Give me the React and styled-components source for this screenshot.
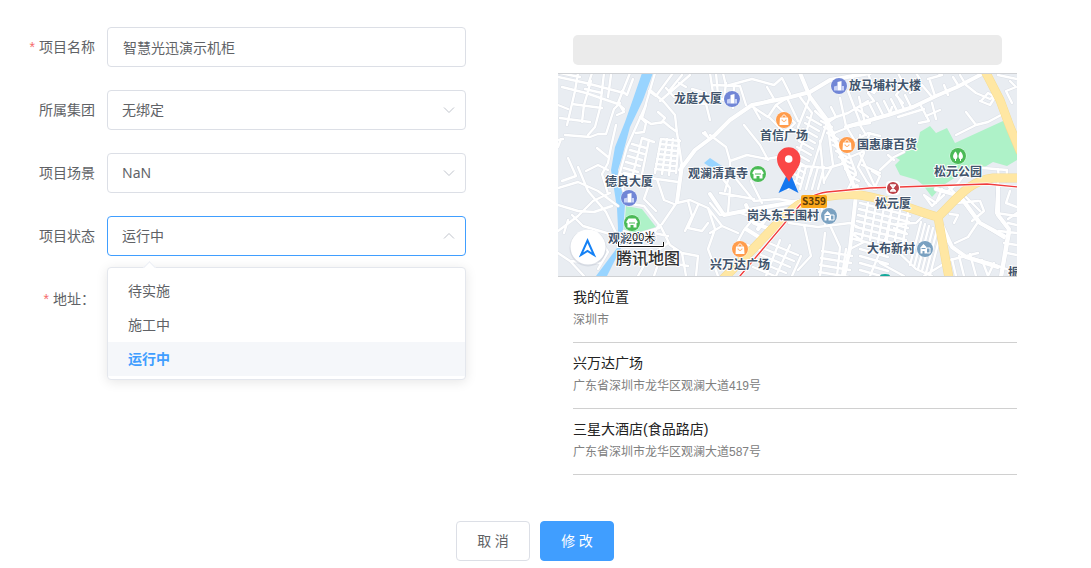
import React, { useState } from "react";
import styled, { createGlobalStyle } from "styled-components";

const GlobalStyle = createGlobalStyle`
  * {
    box-sizing: border-box;
  }
  body {
    margin: 0;
    background: #fff;
    color: #606266;
    font-family: "Noto Sans", "Noto Sans CJK SC", sans-serif;
    font-size: 14px;
  }
`;

const Page = styled.div`
  padding: 27px 21px 0 0;
`;

const Columns = styled.div`
  display: grid;
  grid-template-columns: 1fr 1fr;
  align-items: start;
`;

const Form = styled.form`
  display: flex;
  flex-direction: column;
  gap: 23px;
  padding-right: 69px;
`;

const Field = styled.div`
  display: flex;
`;

const Label = styled.label`
  flex: none;
  width: 107px;
  padding-right: 12px;
  line-height: 40px;
  text-align: right;

  &::before {
    content: "${(props) => (props.$required ? "*" : "")}";
    margin-right: 4px;
    color: #f56c6c;
    font-family: "Liberation Sans", sans-serif;
  }
`;

const Control = styled.div`
  position: relative;
  flex: 1;
`;

const TextInput = styled.input`
  display: block;
  width: 100%;
  height: 40px;
  padding: 0 15px;
  border: 1px solid #dcdfe6;
  border-radius: 4px;
  outline: none;
  background: #fff;
  color: #606266;
  font: inherit;
`;

const SelectInput = styled.select`
  display: block;
  width: 100%;
  height: 40px;
  padding: 0 30px 2px 14px;
  border: 1px solid ${(props) => (props.$open ? "#409eff" : "#dcdfe6")};
  border-radius: 4px;
  outline: none;
  appearance: none;
  background: #fff;
  color: #606266;
  font: inherit;
  cursor: pointer;
`;

const Chevron = styled.svg`
  position: absolute;
  top: 13px;
  right: 10px;
  pointer-events: none;
  transform: ${(props) => (props.$open ? "rotate(180deg)" : "none")};
`;

const Menu = styled.ul`
  position: absolute;
  z-index: 2;
  top: 51px;
  left: 0;
  right: 0;
  margin: 0;
  padding: 6px 0 3px;
  border: 1px solid #e4e7ed;
  border-radius: 4px;
  background: #fff;
  box-shadow: 0 2px 12px rgba(0, 0, 0, 0.1);
  list-style: none;

  &::before {
    content: "";
    position: absolute;
    top: -5px;
    left: 37px;
    width: 8px;
    height: 8px;
    border: solid #ebeef5;
    border-width: 1px 0 0 1px;
    background: #fff;
    transform: rotate(45deg);
  }
`;

const MenuItem = styled.button`
  display: block;
  width: 100%;
  height: 34px;
  padding: 0 20px;
  border: 0;
  background: ${(props) => (props.$active ? "#f5f7fa" : "#fff")};
  color: ${(props) => (props.$active ? "#409eff" : "#606266")};
  font: inherit;
  font-weight: ${(props) => (props.$active ? 700 : 400)};
  line-height: 34px;
  text-align: left;
  cursor: pointer;
`;

const Location = styled.section`
  padding: 8px 53px 0 23px;
`;

const SearchInput = styled.input`
  display: block;
  width: calc(100% - 30px);
  height: 30px;
  margin: 0 15px 8px;
  padding: 0 10px;
  border: 0;
  border-radius: 5px;
  outline: none;
  background: #ebebeb;
  font: inherit;
`;

const MapFrame = styled.div`
  border: solid #cfd1d4;
  border-width: 1px 0;
`;

const MapSvg = styled.svg`
  display: block;
  width: 100%;
  height: auto;
  background: #e9edf2;

  text {
    font-family: "Noto Sans CJK SC", sans-serif;
    paint-order: stroke;
    stroke: #fff;
    stroke-width: 2px;
    stroke-linejoin: round;
  }
`;

const RoadNumber = styled.text`
  && {
    stroke: none;
  }
`;

const PlaceList = styled.ul`
  margin: 0 0 0 15px;
  padding: 0;
  font-family: "Liberation Sans", "Noto Sans CJK SC", sans-serif;
  list-style: none;
`;

const Place = styled.li`
  padding: 10px 0;
  border-bottom: 1px solid #d0d0d0;
`;

const PlaceName = styled.div`
  color: #222;
  font-size: 14px;
  line-height: 21px;
`;

const PlaceAddress = styled.div`
  color: #808080;
  font-size: 12px;
  line-height: 24px;
`;

const Footer = styled.footer`
  display: flex;
  justify-content: center;
  gap: 10px;
  margin-top: 46px;
`;

const Button = styled.button`
  width: 74px;
  height: 40px;
  padding: 0 0 2px;
  border: 1px solid ${(props) => (props.$primary ? "#409eff" : "#dcdfe6")};
  border-radius: 4px;
  background: ${(props) => (props.$primary ? "#409eff" : "#fff")};
  color: ${(props) => (props.$primary ? "#fff" : "#606266")};
  font: inherit;
  cursor: pointer;
`;

// n parallel segments, each shifted by (dx, dy) from the one before
const hatch = (x1, y1, x2, y2, dx, dy, n) =>
  Array.from(
    { length: n },
    (_, i) =>
      `M${x1 + dx * i} ${y1 + dy * i}L${x2 + dx * i} ${y2 + dy * i}`
  ).join("");

const lanes = [
  // north-west blocks
  "M0 4L28 10L66 20",
  "M4 14L28 20L60 31L66 36",
  "M14 31L44 35",
  "M2 45L32 49M0 32L10 36",
  "M7 62L32 64L40 61L48 61L56 36L62 30",
  "M20 0L17 18L9 52M33 8L26 32L24 49",
  "M46 0L42 35L37 54L30 62M53 2L50 24",
  "M72 0L60 30M61 31L66 39L59 42M64 18L69 22L75 6",
  "M27 16L44 20M34 0L30 12M2 0L22 4",
  "M58 52L53 74L50 90L44 101L50 121",
  "M39 75L50 84M10 85L18 103L4 108",
  "M0 67L5 66M0 74L3 66",
  // west side
  "M0 115L20 109L40 118L60 133",
  "M0 132L20 138L36 139L54 133",
  "M20 94L30 118L48 139L58 160",
  "M0 158L20 143L35 128L52 120",
  "M14 142L25 153L52 161",
  "M28 98L40 92L50 97M38 159L50 179L40 196",
  "M10 147L6 160M0 180L12 188L26 203M12 188L42 190",
  // between river and the ring road
  "M97 0L87 34L69 74L61 103L70 132",
  "M92 17L106 29L117 42L119 60L124 92",
  "M115 0L98 23L91 18M132 2L102 28M124 2L111 18M108 15L116 24M121 10L128 14",
  "M88 32L84 45L93 51L106 49L112 54L119 59M100 39L107 45L103 50",
  "M78 60L86 59L88 50L82 44",
  hatch(74, 71, 88, 75, -2, 6, 7),
  "M84 65L74 105M91 67L83 106M84 65L96 69",
  hatch(103, 66, 122, 68, -1, 5, 7),
  "M103 66L97 100M109 66L104 101M115 66L111 102M121 67L118 100",
  "M140 30L148 31L152 47M144 31L148 20L134 16M152 0L155 20M145 60L150 64L147 59",
  "M66 100L82 103L99 106L120 109",
  "M92 109L86 126L98 138M99 106L106 127L116 131",
  // south of the mosque
  "M68 130L86 133L101 152M101 152L96 160L110 163",
  "M123 96L119 129L104 151",
  "M102 152L112 172L124 180L140 183M104 180L96 203",
  "M66 158L77 162L101 155M110 170L90 185L80 203",
  "M119 130L132 127L150 135L164 153",
  "M150 135L157 156L150 176L160 203",
  "M130 128L134 143L127 158M140 132L130 155L144 158L150 150",
  "M124 180L128 203M140 183L138 203M116 176L112 190L130 193",
  // city centre
  "M152 22L166 27L168 10M158 0L160 22M154 12L182 13L188 32M165 0L168 13L194 6L216 12",
  "M176 13L175 35M194 32L202 46M209 14L216 26L206 29M216 12L224 5L232 21",
  "M195 34L210 44L218 32L237 50L227 60L212 45M218 32L229 25L240 48",
  "M152 62L168 74L172 88L189 82L209 86L220 84M186 52L202 72L210 87",
  "M152 99L166 101L181 96M172 88L172 100L167 118",
  "M242 24L254 40L247 63L228 112M252 24L240 54M222 60L232 55L245 60",
  hatch(249, 44, 263, 52, -2, 6, 11),
  hatch(263, 48, 274, 54, 3, 6, 10),
  "M257 38L269 49L252 103M262 68L266 110M270 54L275 92L266 108",
  "M232 92L270 95L287 90",
  hatch(236, 94, 230, 116, 6, 0, 6),
  "M269 47L290 40L310 28M276 60L294 53L312 50M282 25L288 53L297 68M290 18L302 49",
  "M272 48L278 44L273 34M297 68L310 60L322 63M296 34L310 44M301 24L306 46",
  "M285 87L304 79L312 60M290 79L298 100L289 118M302 81L318 116",
  // station district
  "M152 130L162 142L180 139L196 145L186 157",
  "M160 100L172 115L170 140M174 101L196 128L220 126L244 130",
  "M162 120L196 126M193 108L204 130M196 140L232 135",
  "M152 160L164 153L180 160M186 157L180 168L204 178",
  "M231 150L260 154L292 150L300 154",
  "M246 152L253 183L240 197M271 150L282 174L279 203M262 128L267 151",
  hatch(211, 170, 240, 182, -4, 6, 5),
  "M222 167L208 203M232 172L218 203M243 183L234 203",
  hatch(264, 178, 294, 183, -1, 7, 4),
  "M267 160L262 203M288 176L284 203M293 160L306 169L292 176",
  // south-east comb of streets
  hatch(302, 130, 352, 143, -1, 6, 7),
  hatch(310, 130, 304, 165, 8, 2, 6),
  "M335 130L328 164L312 203M338 151L358 150L366 142M336 155L348 160",
  hatch(363, 149, 352, 192, 4, 2, 6),
  "M336 175L358 196L374 203M322 190L346 203M384 192L366 203",
  hatch(302, 176, 330, 184, 0, 7, 4),
  // north-east
  "M302 12L316 20L325 8L336 14M310 0L316 18M302 34L316 28L310 20",
  hatch(312, 32, 318, 44, 7, -2, 6),
  "M340 0L346 12L338 22L345 30M346 12L362 6L358 0M352 20L364 12L374 24",
  "M326 12L336 8L348 18M370 6L384 2L380 0M372 8L377 23M386 12L390 22M395 4L400 12",
  "M363 33L371 48L361 50M368 43L382 37M374 30L378 46M340 44L366 36M332 40L334 34",
  "M408 39L418 52L398 62M418 52L430 49L445 41",
  "M402 2L408 12L418 20L432 26L438 22M423 28L430 20L437 24L432 32L422 28",
  "M452 8L458 14L448 18L454 30M440 2L459 6",
  "M302 62L306 80L300 94L312 114M304 92L322 100M322 97L336 84L346 79",
  "M314 98L322 103L316 116L308 108M330 82L336 87M302 52L308 62",
  "M425 95L449 97L448 108M440 96L441 106",
  // south-east
  "M391 114L406 130L420 149L446 165",
  "M366 122L374 133L386 122M366 122L378 130L384 116M398 130L420 128M408 124L422 138",
  "M414 148L426 138L422 128M420 149L410 164L397 170M396 150L400 142L392 141",
  "M383 156L392 172L406 183L435 191L459 200",
  "M440 108L438 140L452 159L444 203M438 140L459 143M441 158L459 160",
  "M459 140L450 146M450 150L459 152M446 170L459 172M449 180L459 182",
  "M388 188L420 180M401 183L406 203M394 186L398 203M412 181L418 203M424 187L430 203L436 190",
  "M390 118L400 110L406 102M452 118L448 130L459 134",
];

const avenues = [
  "M122 97L137 77L157 62L172 47L194 32L229 25L252 19L272 7L312 0",
  "M242 0L252 24L269 47L285 87L297 116",
  "M302 50L330 42L355 34L378 23L399 14L424 1",
  "M288 54L302 50M124 92L119 129",
  "M152 121L166 142L196 136L242 128",
  "M188 156L204 166M188 132L196 150L212 156M212 140L200 156",
  "M299 113L296 140L292 175L286 203",
  "M378 116L402 123L422 150L446 163",
  "M384 152L394 174L408 184L440 194",
  "M440 112L440 142L451 156L443 203",
];

const highways = [
  "M427 -2L442 27L452 54L462 78",
  "M464 105L435 105C412 108 402 122 380 144C360 139 335 127 302 122C280 120 255 125 242 131C228 139 208 163 192 179L166 205",
  "M380 144L385 172L391 205",
];

const metro = "M182 203L242 132C250 125 256 121 269 119L312 115L429 111L460 114";

const pois = [
  { kind: "office", x: 174, y: 26 },
  { kind: "office", x: 281, y: 13 },
  { kind: "office", x: 71, y: 125 },
  { kind: "shop", x: 226, y: 47 },
  { kind: "shop", x: 289, y: 72 },
  { kind: "shop", x: 182, y: 176 },
  { kind: "temple", x: 200, y: 101 },
  { kind: "temple", x: 74, y: 150 },
  { kind: "park", x: 400, y: 83 },
  { kind: "village", x: 271, y: 143 },
  { kind: "village", x: 367, y: 176 },
];

const labels = [
  { text: "龙庭大厦", x: 116, y: 30 },
  { text: "放马埔村大楼", x: 291, y: 17 },
  { text: "首信广场", x: 202, y: 67 },
  { text: "国惠康百货", x: 299, y: 76 },
  { text: "观澜清真寺", x: 130, y: 105 },
  { text: "德良大厦", x: 47, y: 113 },
  { text: "松元公园", x: 376, y: 103 },
  { text: "松元厦", x: 317, y: 135 },
  { text: "岗头东王围村", x: 189, y: 147 },
  { text: "大布新村", x: 309, y: 180 },
  { text: "兴万达广场", x: 152, y: 196 },
  { text: "观澜古寺", x: 50, y: 170 },
  { text: "振", x: 450, y: 204 },
];

const poiColors = {
  office: "#7186d6",
  shop: "#ff9c4c",
  temple: "#4aba56",
  park: "#4aba56",
  village: "#7aa1c1",
};

const glyphs = {
  office: (
    <>
      <path d="M-5 4.5V0.5L-1.5 -0.5V4.5Z" fill="#c9d2f6" />
      <path d="M-1.500 4.500V-4L2.500 -5V4.500Z" fill="#fff" />
      <path d="M2.500 0H5V4.500H2.500Z" fill="#c9d2f6" />
    </>
  ),
  shop: (
    <>
      <path d="M-4 -2.5H4L4.500 5H-4.500Z" fill="#fff" />
      <path d="M-2 -2.5C-2 -5.8 2 -5.8 2 -2.5" fill="none" stroke="#fff" />
      <path d="M-2 -0.5C-2 2 2 2 2 -0.5" fill="none" stroke="#ff9c4c" />
    </>
  ),
  temple: (
    <>
      <path
        d="M-3.5 -4.5H3.5L5.5 -1.5V0H4.5V4.5H1.5V2H-1.5V4.5H-4.5V0H-5.5V-1.5Z"
        fill="#fff"
      />
      <path d="M-3 0H3" stroke="#4aba56" />
    </>
  ),
  park: (
    <>
      <path d="M-2.5 -4.5C-6 -1 -5.5 3 -2.5 3.2C0.2 3 0 -2 -2.5 -4.5Z" fill="#fff" />
      <path d="M2.5 -4.5C6 -1 5.5 3 2.5 3.2C-0.2 3 0 -2 2.5 -4.5Z" fill="#fff" />
      <path d="M-2.5 2V5M2.5 2V5" stroke="#fff" />
    </>
  ),
  village: (
    <>
      <path d="M-5 -1L-1.500 -5L1.500 -2V4.500H-0.500V2H-2.500V4.500H-4.500V-1Z" fill="#fff" />
      <path d="M1.500 -1H5V4H1.500Z" fill="none" stroke="#fff" />
      <path d="M-3.500 -0.500H0.500M3 1V2" stroke="#7aa1c1" />
    </>
  ),
};

const Poi = ({ kind, x, y }) => (
  <g transform={`translate(${x} ${y})`}>
    <circle r="8.5" fill="#fff" opacity="0.7" />
    <circle r="8" fill={poiColors[kind]} />
    {glyphs[kind]}
  </g>
);

const CityMap = () => (
  <MapFrame>
    <MapSvg viewBox="0 1 459 202" role="img" aria-label="地图">
      <path
        d="M342 87L337 84L350 77L360 69L362 59L372 53L378 60L389 55L397 70L445 48L459 70V87L449 93L435 89L425 95L398 104L384 113L374 124L365 112L359 107L342 102L337 92Z"
        fill="#aef2c8"
      />
      <path d="M68 133L84 136L98 154L76 163L66 158Z" fill="#aef2c8" />
      <path
        d="M84 0L74 29L67 49L57 74L53 97L59 135L60 155L59 175L38 203H49L63 175L65 159L67 132L60 97L64 84L72 54L85 27L95 0Z"
        fill="#98d4ff"
      />
      <path d="M146 90L152 85L164 93L158 98Z" fill="#98d4ff" />

      <g fill="none" strokeLinecap="round" strokeLinejoin="round">
        <path d={lanes.join("")} stroke="#dce0e7" strokeWidth="3.4" />
        <path d={avenues.join("")} stroke="#dce0e7" strokeWidth="5" />
        <path d={lanes.join("")} stroke="#fff" strokeWidth="2.4" />
        <path d={avenues.join("")} stroke="#fff" strokeWidth="4" />
        <path d={highways.join("")} stroke="#f6dc92" strokeWidth="9" />
        <path d={highways.join("")} stroke="#ffe7a3" strokeWidth="8" />
        <path d={metro} stroke="#fff" strokeWidth="3" />
        <path d={metro} stroke="#f03c3c" strokeWidth="1.4" />
      </g>

      <ellipse cx="327" cy="203" rx="5" ry="2" fill="#12a89a" />

      {pois.map((poi) => (
        <Poi key={`${poi.x}-${poi.y}`} {...poi} />
      ))}

      <rect x="328" y="108" width="14" height="14" rx="4" fill="#fff" />
      <circle cx="335" cy="115" r="6" fill="#bd444b" />
      <path
        d="M332 112H338M332 118H338M333 112L337 118M337 112L333 118"
        stroke="#fff"
        strokeWidth="1.4"
      />

      <g fontSize="12" fontWeight="700" fill="#41546c">
        {labels.map((label) => (
          <text key={label.text} x={label.x} y={label.y}>
            {label.text}
          </text>
        ))}
      </g>

      <rect x="243" y="122" width="26" height="13" rx="2" fill="#fba71b" />
      <RoadNumber
        x="256"
        y="132"
        textAnchor="middle"
        fontSize="10"
        fontWeight="700"
        fill="#5b3c08"
      >
        S359
      </RoadNumber>

      <path d="M220.5 120L231 97L240.5 120L231 115Z" fill="#1677ef" />
      <path
        d="M231 109C227 100 219 95 219 86A11.7 11.7 0 0 1 242.4 86C242.4 95 235 100 231 109Z"
        fill="#fa4646"
      />
      <circle cx="230.7" cy="86" r="3.8" fill="#fff" />

      <circle cx="30" cy="175" r="18.5" fill="#c9ced8" opacity="0.6" />
      <circle cx="30" cy="174" r="17.5" fill="#fff" />
      <path
        d="M29.5 167.5L36 182L29.5 178L23 182Z"
        fill="none"
        stroke="#1481f5"
        strokeWidth="2"
      />

      <path d="M60.5 169V173.5H105.5V169" fill="none" stroke="#fff" strokeWidth="3" />
      <path d="M60.5 169V173.5H105.5V169" fill="none" stroke="#111" />
      <text x="68" y="168" fontSize="11" fill="#111">
        200米
      </text>
      <text x="58" y="191" fontSize="16" fontWeight="500" fill="#333">
        腾讯地图
      </text>
    </MapSvg>
  </MapFrame>
);

const Arrow = ({ open }) => (
  <Chevron $open={open} width="14" height="14" viewBox="0 0 14 14" aria-hidden="true">
    <path d="M2 4.5L7 9.5L12 4.5" fill="none" stroke="#c0c4cc" />
  </Chevron>
);

const states = ["待实施", "施工中", "运行中"];

const places = [
  { name: "我的位置", address: "深圳市" },
  { name: "兴万达广场", address: "广东省深圳市龙华区观澜大道419号" },
  { name: "三星大酒店(食品路店)", address: "广东省深圳市龙华区观澜大道587号" },
];

const App = () => {
  const [name, setName] = useState("智慧光迅演示机柜");
  const [state, setState] = useState("运行中");
  const [open, setOpen] = useState(true);

  const toggleMenu = (e) => {
    e.preventDefault();
    setOpen(!open);
  };

  const pickState = (value) => {
    setState(value);
    setOpen(false);
  };

  return (
    <Page>
      <GlobalStyle />
      <Columns>
        <Form id="project" onSubmit={(e) => e.preventDefault()}>
          <Field>
            <Label htmlFor="name" $required>
              项目名称
            </Label>
            <Control>
              <TextInput
                id="name"
                value={name}
                onChange={(e) => setName(e.target.value)}
              />
            </Control>
          </Field>
          <Field>
            <Label htmlFor="group">所属集团</Label>
            <Control>
              <SelectInput id="group">
                <option>无绑定</option>
              </SelectInput>
              <Arrow />
            </Control>
          </Field>
          <Field>
            <Label htmlFor="scene">项目场景</Label>
            <Control>
              <SelectInput id="scene">
                <option>NaN</option>
              </SelectInput>
              <Arrow />
            </Control>
          </Field>
          <Field>
            <Label htmlFor="state">项目状态</Label>
            <Control>
              <SelectInput
                id="state"
                $open={open}
                value={state}
                onMouseDown={toggleMenu}
                onChange={(e) => setState(e.target.value)}
              >
                {states.map((item) => (
                  <option key={item}>{item}</option>
                ))}
              </SelectInput>
              <Arrow open={open} />
              {open && (
                <Menu>
                  {states.map((item) => (
                    <li key={item}>
                      <MenuItem
                        type="button"
                        $active={item === state}
                        onClick={() => pickState(item)}
                      >
                        {item}
                      </MenuItem>
                    </li>
                  ))}
                </Menu>
              )}
            </Control>
          </Field>
          <Field>
            <Label as="span" $required>
              地址：
            </Label>
          </Field>
        </Form>

        <Location>
          <SearchInput type="search" aria-label="搜索地点" />
          <CityMap />
          <PlaceList>
            {places.map((place) => (
              <Place key={place.name}>
                <PlaceName>{place.name}</PlaceName>
                <PlaceAddress>{place.address}</PlaceAddress>
              </Place>
            ))}
          </PlaceList>
        </Location>
      </Columns>

      <Footer>
        <Button type="button">取 消</Button>
        <Button type="submit" form="project" $primary>
          修 改
        </Button>
      </Footer>
    </Page>
  );
};

export default App;
